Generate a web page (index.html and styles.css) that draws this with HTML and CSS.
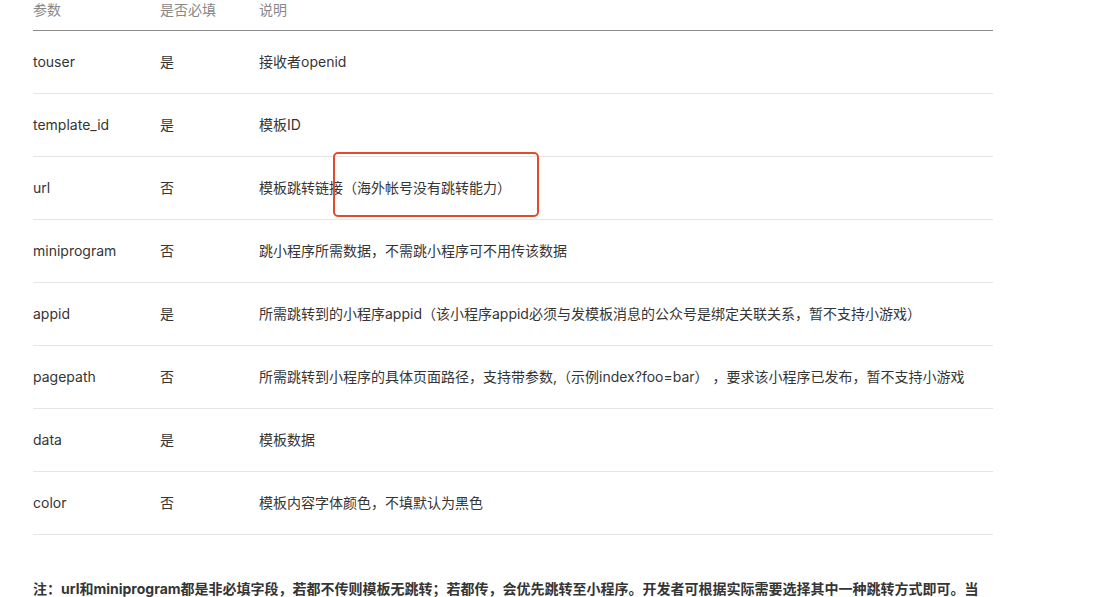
FILE: index.html
```html
<!DOCTYPE html>
<html lang="zh-CN">
<head>
    <meta charset="UTF-8">
    <title>参数说明</title>
    <link rel="stylesheet" href="styles.css">
</head>
<body>
    <div class="page">
        <table class="params">
            <thead>
                <tr>
                    <th class="col-name">参数</th>
                    <th class="col-req">是否必填</th>
                    <th>说明</th>
                </tr>
            </thead>
            <tbody>
                <tr><td>touser</td><td>是</td><td>接收者openid</td></tr>
                <tr><td>template_id</td><td>是</td><td>模板ID</td></tr>
                <tr><td>url</td><td>否</td><td>模板跳转链接（海外帐号没有跳转能力）</td></tr>
                <tr><td>miniprogram</td><td>否</td><td>跳小程序所需数据，不需跳小程序可不用传该数据</td></tr>
                <tr><td>appid</td><td>是</td><td>所需跳转到的小程序appid（该小程序appid必须与发模板消息的公众号是绑定关联关系，暂不支持小游戏）</td></tr>
                <tr><td>pagepath</td><td>否</td><td>所需跳转到小程序的具体页面路径，支持带参数,（示例index?foo=bar） ，要求该小程序已发布，暂不支持小游戏</td></tr>
                <tr><td>data</td><td>是</td><td>模板数据</td></tr>
                <tr><td>color</td><td>否</td><td>模板内容字体颜色，不填默认为黑色</td></tr>
            </tbody>
        </table>
        <p class="note"><strong>注：url和miniprogram都是非必填字段，若都不传则模板无跳转；若都传，会优先跳转至小程序。开发者可根据实际需要选择其中一种跳转方式即可。当</strong></p>
        <!-- 标注框 -->
        <div class="mark"></div>
    </div>
</body>
</html>
```

FILE: styles.css
```css
body {
    margin: 0;
    background: #fff;
    color: #353535;
    font-family: Inter, "Noto Sans CJK SC", sans-serif;
    font-size: 14px;
}
.page {
    position: relative;
    padding-left: 33px;
    height: 597px;
    overflow: hidden;
}
.params {
    width: 960px;
    border-collapse: collapse;
}
.params th {
    height: 20px;
    padding: 0 0 10px;
    line-height: 20px;
    text-align: left;
    font-weight: normal;
    color: #888;
    border-bottom: 1px solid #8c8c8c;
}
.col-name {
    width: 127px;
}
.col-req {
    width: 99px;
}
.params td {
    height: 62px;
    padding: 0;
    line-height: 20px;
    border-bottom: 1px solid #e5e5e5;
}
.note {
    margin: 42px 0 0;
    line-height: 24px;
}
.note strong {
    font-weight: bold;
}
.mark {
    position: absolute;
    left: 333px;
    top: 152px;
    width: 206px;
    height: 65px;
    box-sizing: border-box;
    border: 2.5px solid #e24b2b;
    border-radius: 5px;
}
```
